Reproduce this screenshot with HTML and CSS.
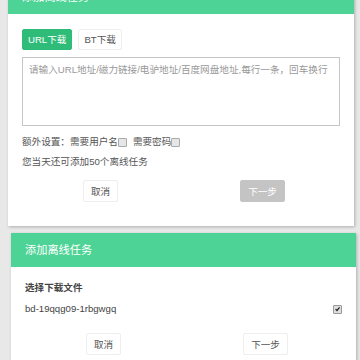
FILE: index.html
```html
<!DOCTYPE html>
<html lang="zh-CN">
<head>
<meta charset="utf-8">
<title>添加离线任务</title>
<link rel="stylesheet" href="styles.css">
</head>
<body>
<div class="page">
  <section class="dialog d1">
    <header class="dlg-head">添加离线任务</header>
    <div class="dlg-body">
      <div class="tabs">
        <button class="tab active">URL下载</button>
        <button class="tab">BT下载</button>
      </div>
      <textarea class="urls" placeholder="请输入URL地址/磁力链接/电驴地址/百度网盘地址,每行一条，回车换行"></textarea>
      <div class="opts">额外设置：需要用户名<span class="cb"></span><span class="gap"></span>需要密码<span class="cb"></span></div>
      <p class="quota">您当天还可添加50个离线任务</p>
      <div class="actions">
        <button class="btn">取消</button>
        <button class="btn disabled">下一步</button>
      </div>
    </div>
  </section>
  <section class="dialog d2">
    <header class="dlg-head">添加离线任务</header>
    <div class="dlg-body b2">
      <p class="label">选择下载文件</p>
      <div class="file">
        <span>bd-19qqg09-1rbgwgq</span>
        <span class="cb checked"><svg viewBox="0 0 9 9" width="9" height="9"><path d="M2 4.6 L3.8 6.4 L7.2 2.4" fill="none" stroke="#222" stroke-width="1.6"/></svg></span>
      </div>
      <div class="actions a2">
        <button class="btn">取消</button>
        <button class="btn">下一步</button>
      </div>
    </div>
  </section>
</div>
</body>
</html>
```
FILE: styles.css
```css
html, body {
  margin: 0;
  padding: 0;
  background: #e8e8e8;
  overflow: hidden;
}
body {
  font-family: "Liberation Sans", "Noto Sans CJK SC", sans-serif;
  font-size: 9.6px;
  color: #555;
}
.page {
  display: flex;
  flex-direction: column;
  gap: 7px;
}
.dialog {
  background: #fff;
  box-shadow: 1px 1px 3px rgba(0, 0, 0, 0.25);
}
.d1 {
  margin: -20px 0 0 8px;
  width: 346px;
}
.d2 {
  margin-left: 11px;
  width: 345px;
  height: 200px;
}
.dlg-head {
  height: 34px;
  line-height: 34px;
  background: #4dd395;
  color: #fff;
  font-size: 11.2px;
  padding-left: 14px;
}
.dlg-body {
  padding: 15px 14px 24px;
}
.tabs {
  display: flex;
  gap: 6px;
  height: 21px;
}
.tab {
  font: inherit;
  height: 21px;
  padding: 0 5px;
  border: 1px solid #eee;
  border-radius: 2px;
  background: #fff;
  color: #555;
  line-height: 19px;
}
.tab.active {
  background: #2fbc78;
  border-color: #2fbc78;
  color: #fff;
}
.urls {
  display: block;
  box-sizing: border-box;
  width: 318px;
  height: 69px;
  margin: 7px 0 0;
  padding: 4px 6px;
  border: 1px solid #c6c6c6;
  font: inherit;
  resize: none;
  outline: none;
}
.urls::placeholder {
  color: #999;
}
.opts {
  margin-top: 8px;
  line-height: 16px;
  display: flex;
  align-items: center;
}
.cb {
  display: inline-block;
  box-sizing: border-box;
  width: 9px;
  height: 9px;
  border: 1px solid #aaa;
  border-radius: 1px;
  background: #e6e6e6;
}
.gap {
  display: inline-block;
  width: 6px;
}
.quota {
  margin: 4px 0 0;
  line-height: 16px;
}
.actions {
  display: flex;
  padding-left: 61px;
  gap: 122px;
  margin-top: 10px;
}
.btn {
  font: inherit;
  height: 22px;
  padding: 0 7px;
  border: 1px solid #eee;
  border-radius: 2px;
  background: #fff;
  color: #555;
}
.btn.disabled {
  background: #c4c4c4;
  border-color: #c4c4c4;
  color: #fff;
}
.b2 {
  padding-top: 13px;
}
.label {
  margin: 0;
  line-height: 16px;
  font-weight: bold;
  color: #444;
}
.file {
  margin-top: 5px;
  line-height: 16px;
  display: flex;
  justify-content: space-between;
  align-items: center;
  color: #444;
}
.cb.checked {
  background: #ddd;
  border-color: #999;
  display: flex;
  align-items: center;
  justify-content: center;
}
.cb.checked svg {
  display: block;
  width: 8px;
  height: 8px;
}
.a2 {
  margin-top: 16px;
}
```
